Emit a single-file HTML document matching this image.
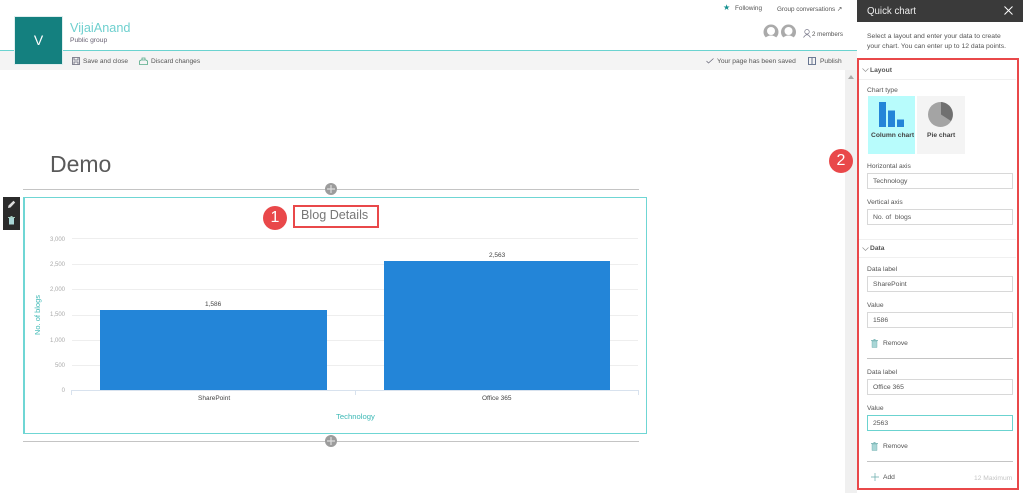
<!DOCTYPE html>
<html><head><meta charset="utf-8"><style>
html,body{margin:0;padding:0;background:#fff}
body{width:1023px;height:493px;overflow:hidden;position:relative;font-family:"Liberation Sans",sans-serif;color:#555;filter:blur(.3px)}
.a{position:absolute}
.t{position:absolute;white-space:nowrap;font-size:6.7px;line-height:10px;color:#555;margin-top:1px}
.i{position:absolute;left:867px;width:144px;height:14px;border:1px solid #d8d8d8;background:#fff;font-size:6.8px;line-height:15px;color:#555;text-indent:5px}
.d{position:absolute;background:#c4c4c4;height:1px}
.g{position:absolute;left:72px;width:566px;height:1px;background:#eeeeee}
.y{position:absolute;width:30px;left:35px;text-align:right;font-size:6px;line-height:8px;color:#aaa;margin-top:1px}
svg{position:absolute;overflow:visible}
</style></head><body>
<div class="a" style="left:0;top:51px;width:857px;height:19px;background:#f4f4f4"></div>
<div class="a" style="left:0;top:50px;width:857px;height:1px;background:#6bd3d0"></div>
<div class="a" style="left:15px;top:17px;width:47px;height:47px;background:#14807f;outline:1px solid #dfeeee;color:#fff;font-size:14px;line-height:47px;text-align:center">V</div>
<div class="t" style="left:70px;top:18px;font-size:12.7px;line-height:18px;color:#6fd0cf">VijaiAnand</div>
<div class="t" style="left:70px;top:35px;color:#665f70">Public group</div>
<svg style="left:72px;top:57px" width="8" height="8" viewBox="0 0 8 8"><path d="M.5.5h7v7h-7zM2 .5v2.500h4V.5M2 7.500V5h4v2.500" fill="none" stroke="#667" stroke-width=".8"/></svg>
<div class="t" style="left:83px;top:56px;font-size:6.6px">Save and close</div>
<svg style="left:139px;top:57px" width="9" height="8" viewBox="0 0 9 8"><path d="M.5 7.500V4l1.500-1h5l1.500 1v3.500zM3 3V1h3v2" fill="none" stroke="#5a8" stroke-width=".8"/></svg>
<div class="t" style="left:151px;top:56px;font-size:6.6px">Discard changes</div>
<div class="t" style="left:723px;top:2px;color:#14908f;font-size:8px">★</div>
<div class="t" style="left:735px;top:3px;font-size:6.4px">Following</div>
<div class="t" style="left:777px;top:4px;font-size:6.3px">Group conversations ↗</div>
<svg style="left:763px;top:24px" width="34" height="16" viewBox="0 0 34 16"><g fill="#aaa"><circle cx="8" cy="8" r="7.500"/><circle cx="25.500" cy="8" r="7.500"/></g><g fill="#fff"><circle cx="8" cy="7" r="4"/><circle cx="25.500" cy="7" r="4"/><path d="M2 14q6-5 12 0v2H2zM19.500 14q6-5 12 0v2h-12z"/></g></svg>
<svg style="left:803px;top:29px" width="8" height="9" viewBox="0 0 8 9"><path d="M4 .5a2.200 2.200 0 110 4.500 2.200 2.200 0 010-4.500zM.5 8.500Q4 3 7.500 8.500" fill="none" stroke="#778" stroke-width=".7"/></svg>
<div class="t" style="left:812px;top:29px;font-size:6.2px">2 members</div>
<svg style="left:706px;top:58px" width="8" height="6" viewBox="0 0 8 6"><path d="M.5 3l2 2 5-4.500" fill="none" stroke="#667" stroke-width=".7"/></svg>
<div class="t" style="left:717px;top:56px;font-size:6.65px">Your page has been saved</div>
<svg style="left:808px;top:57px" width="8" height="8" viewBox="0 0 8 8"><path d="M.5.5h3l.5.500.5-.500h3v7h-7zM4 1v6" fill="none" stroke="#457" stroke-width=".8"/></svg>
<div class="t" style="left:820px;top:56px;font-size:6.6px">Publish</div>
<div class="a" style="left:845px;top:70px;width:12px;height:423px;background:#f0f0f0"></div>
<div class="a" style="left:848px;top:75px;width:0;height:0;border:3px solid transparent;border-bottom:4px solid #aaa;border-top:0"></div>

<div class="t" style="left:50px;top:149px;font-size:23px;line-height:28px;color:#5a5a5a">Demo</div>
<div class="d" style="left:23px;top:189px;width:616px;height:1px"></div>
<div class="d" style="left:23px;top:441px;width:616px;height:1px"></div>
<svg style="left:325px;top:183px" width="12" height="12" viewBox="0 0 12 12"><circle cx="6" cy="6" r="6" fill="#9c9c9c"/><path d="M6 2v8M2 6h8" stroke="#ddd" stroke-width="1.200"/></svg>
<svg style="left:325px;top:435px" width="12" height="12" viewBox="0 0 12 12"><circle cx="6" cy="6" r="6" fill="#9c9c9c"/><path d="M6 2v8M2 6h8" stroke="#ddd" stroke-width="1.200"/></svg>
<div class="a" style="left:3px;top:197px;width:17px;height:33px;background:#2b2b2b"></div>
<svg style="left:7px;top:200px" width="9" height="9" viewBox="0 0 9 9"><path d="M1 8l.5-2.500L6.500.8l1.700 1.700L3.500 7.500z" fill="#ddd"/></svg>
<svg style="left:8px;top:216px" width="7" height="9" viewBox="0 0 7 9"><path d="M1 2h5v6.500H1z" fill="#a9d6d6"/><path d="M0 1.500h7M2.500.5h2" stroke="#cfe" stroke-width=".8"/></svg>

<div class="a" style="left:23px;top:197px;width:621px;height:235px;border:1px solid #6fd6d4;border-left-width:2px"></div>
<div class="g" style="top:238px"></div><div class="g" style="top:264px"></div><div class="g" style="top:289px"></div><div class="g" style="top:315px"></div><div class="g" style="top:340px"></div><div class="g" style="top:365px"></div>
<div class="a" style="left:71px;top:390px;width:568px;height:1px;background:#d8e2ee"></div>
<div class="a" style="left:71px;top:390px;width:1px;height:5px;background:#d8e2ee"></div>
<div class="a" style="left:355px;top:390px;width:1px;height:5px;background:#d8e2ee"></div>
<div class="a" style="left:638px;top:390px;width:1px;height:5px;background:#d8e2ee"></div>
<div class="y" style="top:235px">3,000</div><div class="y" style="top:260px">2,500</div><div class="y" style="top:285px">2,000</div><div class="y" style="top:310px">1,500</div><div class="y" style="top:336px">1,000</div><div class="y" style="top:361px">500</div><div class="y" style="top:386px">0</div>
<div class="a" style="left:100px;top:310px;width:227px;height:80px;background:#2385d8"></div>
<div class="a" style="left:384px;top:261px;width:226px;height:129px;background:#2385d8"></div>
<div class="t" style="left:205px;top:299px;font-size:6.5px;color:#444">1,586</div>
<div class="t" style="left:489px;top:250px;font-size:6.5px;color:#444">2,563</div>
<div class="t" style="left:198px;top:393px;font-size:6.5px;color:#444">SharePoint</div>
<div class="t" style="left:482px;top:393px;font-size:6.5px;color:#444">Office 365</div>
<div class="t" style="left:336px;top:411px;font-size:7.7px;color:#3cb8b5">Technology</div>
<div class="t" style="left:38px;top:314px;font-size:7.5px;color:#3cb8b5;transform:translate(-50%,-50%) rotate(-90deg)">No. of blogs</div>
<div class="t" style="left:301px;top:206px;font-size:12.6px;line-height:16px;color:#777">Blog Details</div>
<div class="a" style="left:293px;top:205px;width:82px;height:19px;border:2px solid #e9484a"></div>
<div class="a" style="left:263px;top:206px;width:24px;height:24px;border-radius:50%;background:#e9484a;color:#fff;font-size:16px;line-height:24px;text-align:center">1</div>

<div class="a" style="left:857px;top:0;width:166px;height:22px;background:#3a3a3a"></div>
<div class="t" style="left:867px;top:3px;font-size:9.7px;line-height:15px;color:#eee">Quick chart</div>
<svg style="left:1004px;top:6px" width="9" height="9" viewBox="0 0 9 9"><path d="M.5.5l8 8M8.500.5l-8 8" stroke="#fff" stroke-width="1"/></svg>
<div class="t" style="left:867px;top:31px;font-size:6.8px">Select a layout and enter your data to create</div>
<div class="t" style="left:867px;top:41px;font-size:6.8px">your chart. You can enter up to 12 data points.</div>
<div class="a" style="left:857px;top:58px;width:158px;height:428px;border:2px solid #e9484a"></div>
<svg style="left:862px;top:68px" width="7" height="4" viewBox="0 0 7 4"><path d="M.5.5l3 3 3-3" fill="none" stroke="#888" stroke-width=".6"/></svg>
<div class="t" style="left:870px;top:65px;font-weight:bold;color:#555">Layout</div>
<div class="a" style="left:859px;top:79px;width:157px;height:1px;background:#f0f0f0"></div>
<div class="t" style="left:867px;top:85px">Chart type</div>
<div class="a" style="left:868px;top:96px;width:47px;height:58px;background:#b8fcfc"></div>
<div class="a" style="left:917px;top:96px;width:48px;height:58px;background:#f4f4f4"></div>
<svg style="left:879px;top:102px" width="26" height="25" viewBox="0 0 26 25"><path d="M0 0h7v25H0zM9 8.500h7v16.500H9zM18 17.500h7v7.500h-7z" fill="#2385d8"/></svg>
<svg style="left:928px;top:102px" width="25" height="25" viewBox="0 0 25 25"><circle cx="12.500" cy="12.500" r="12.500" fill="#a4a4a4"/><path d="M13 12.500V0a12.500 12.500 0 0 1 10 19z" fill="#707070"/></svg>
<div class="t" style="left:871px;top:130px;font-weight:bold;color:#444">Column chart</div>
<div class="t" style="left:927px;top:130px;font-weight:bold;color:#444">Pie chart</div>
<div class="t" style="left:867px;top:161px">Horizontal axis</div>
<div class="i" style="top:173px">Technology</div>
<div class="t" style="left:867px;top:197px">Vertical axis</div>
<div class="i" style="top:209px">No. of&nbsp; blogs</div>
<div class="a" style="left:859px;top:239px;width:157px;height:1px;background:#f0f0f0"></div>
<svg style="left:862px;top:247px" width="7" height="4" viewBox="0 0 7 4"><path d="M.5.5l3 3 3-3" fill="none" stroke="#888" stroke-width=".6"/></svg>
<div class="t" style="left:870px;top:243px;font-weight:bold;color:#555">Data</div>
<div class="a" style="left:859px;top:257px;width:157px;height:1px;background:#f0f0f0"></div>
<div class="t" style="left:867px;top:264px">Data label</div>
<div class="i" style="top:276px">SharePoint</div>
<div class="t" style="left:867px;top:300px">Value</div>
<div class="i" style="top:312px">1586</div>
<svg style="left:871px;top:339px" width="7" height="9" viewBox="0 0 7 9"><path d="M1 2h5v6.500H1z" fill="#a9d6d6" stroke="#6aa" stroke-width=".4"/><path d="M0 1.500h7M2.500.5h2" stroke="#6aa" stroke-width=".7"/></svg>
<div class="t" style="left:883px;top:338px">Remove</div>
<div class="d" style="left:867px;top:358px;width:146px"></div>
<div class="t" style="left:867px;top:367px">Data label</div>
<div class="i" style="top:379px">Office 365</div>
<div class="t" style="left:867px;top:403px">Value</div>
<div class="i" style="top:415px;border-color:#6bd3d0">2563</div>
<svg style="left:871px;top:442px" width="7" height="9" viewBox="0 0 7 9"><path d="M1 2h5v6.500H1z" fill="#a9d6d6" stroke="#6aa" stroke-width=".4"/><path d="M0 1.500h7M2.500.5h2" stroke="#6aa" stroke-width=".7"/></svg>
<div class="t" style="left:883px;top:441px">Remove</div>
<div class="d" style="left:867px;top:461px;width:146px"></div>
<svg style="left:871px;top:473px" width="8" height="8" viewBox="0 0 8 8"><path d="M4 0v8M0 4h8" stroke="#6aa" stroke-width=".7"/></svg>
<div class="t" style="left:883px;top:472px">Add</div>
<div class="t" style="left:974px;top:473px;color:#c4c4c4">12 Maximum</div>
<div class="a" style="left:829px;top:149px;width:24px;height:24px;border-radius:50%;background:#e9484a;color:#fff;font-size:16px;line-height:24px;text-align:center">2</div>
</body></html>
